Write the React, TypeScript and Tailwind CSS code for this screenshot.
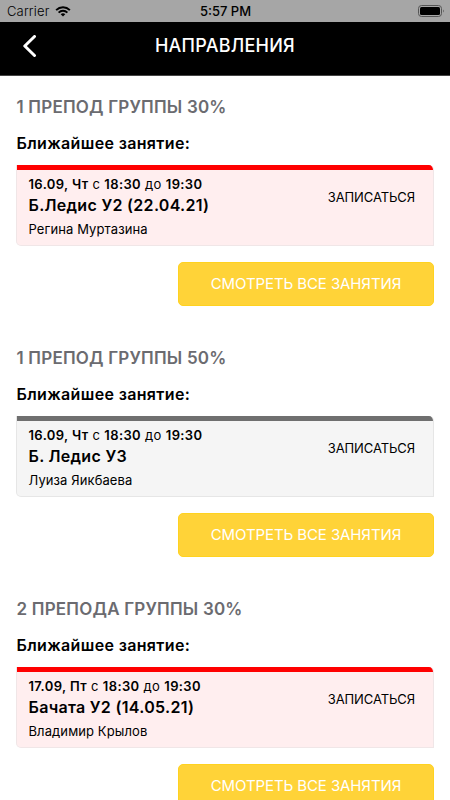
type Lesson = {
  group: string;
  date: string;
  from: string;
  to: string;
  title: string;
  teacher: string;
  color: 'red' | 'gray';
};

const lessons: Lesson[] = [
  { group: '1 ПРЕПОД ГРУППЫ 30%', date: '16.09, Чт', from: '18:30', to: '19:30', title: 'Б.Ледис У2 (22.04.21)', teacher: 'Регина Муртазина', color: 'red' },
  { group: '1 ПРЕПОД ГРУППЫ 50%', date: '16.09, Чт', from: '18:30', to: '19:30', title: 'Б. Ледис У3', teacher: 'Луиза Яикбаева', color: 'gray' },
  { group: '2 ПРЕПОДА ГРУППЫ 30%', date: '17.09, Пт', from: '18:30', to: '19:30', title: 'Бачата У2 (14.05.21)', teacher: 'Владимир Крылов', color: 'red' },
];

function StatusBar() {
  return (
    <div className="grid h-[22px] grid-cols-3 items-center bg-[#a6a6a6] pr-[6px] pl-[7px] text-[13px]">
      <div className="flex items-center gap-[5px]">
        <span className="pt-px font-light tracking-[0.15px]">Carrier</span>
        <svg width="16" height="11" viewBox="0 0 17 12" fill="none" stroke="black" strokeWidth="2.1">
          <path d="M1 4.5c4.2-4.1 10.8-4.1 15 0" />
          <path d="M3.7 7.2c2.7-2.6 6.9-2.6 9.6 0" />
          <path d="M8.5 11.5 6 9c1.4-1.3 3.6-1.3 5 0Z" fill="black" stroke="none" />
        </svg>
      </div>
      <span className="pt-px text-center font-medium">5:57 PM</span>
      <svg className="justify-self-end" width="26" height="12" viewBox="0 0 26 12">
        <rect x="0.5" y="0.5" width="23" height="11" rx="3" fill="none" stroke="#555" />
        <rect x="2" y="2" width="20" height="8" rx="1.5" />
        <path d="M25 4.5v3c1-.6 1-2.4 0-3" fill="#555" />
      </svg>
    </div>
  );
}

function LessonCard({ lesson }: { lesson: Lesson }) {
  const red = lesson.color === 'red';

  return (
    <div
      className={`mt-3 h-[81px] overflow-hidden rounded-tr-[5px] rounded-bl-[5px] border border-t-0 ${red ? 'border-[#f0e6e7] bg-[#ffeeef]' : 'border-[#e6e6e6] bg-[#f5f5f5]'}`}
    >
      <div className={`h-[5px] ${red ? 'bg-[#ff0000]' : 'bg-[#6f6f6f]'}`} />
      <div className="flex justify-between pr-[18px] pl-[11.5px]">
        <div>
          <p className="mt-[6px] text-[13px] leading-4 tracking-[0.37px]">
            <b className="font-semibold">{lesson.date}</b> с <b className="font-semibold">{lesson.from}</b> до{' '}
            <b className="font-semibold">{lesson.to}</b>
          </p>
          <h3 className="mt-[3px] text-base leading-5 font-semibold tracking-[0.3px]">{lesson.title}</h3>
          <p className="mt-[6px] text-[13px] leading-4 tracking-[0.1px]">{lesson.teacher}</p>
        </div>
        <button type="button" className="mt-[17px] h-5 text-[13px] leading-5 tracking-[-0.1px]">
          ЗАПИСАТЬСЯ
        </button>
      </div>
    </div>
  );
}

function LessonSection({ lesson }: { lesson: Lesson }) {
  return (
    <section className="flex h-[251px] flex-col">
      <h2 className="pl-[0.5px] text-[17px] leading-[22px] font-semibold tracking-[0.2px] text-[#6b6b70]">{lesson.group}</h2>
      <p className="mt-[15px] pl-[0.5px] text-base leading-5 font-semibold tracking-[0.35px]">Ближайшее занятие:</p>
      <LessonCard lesson={lesson} />
      <button
        type="button"
        className="mt-4 h-[44px] w-[256px] shrink-0 self-end rounded-[5px] border border-[#ffd21f] bg-[#ffd338] text-[15px] tracking-[-0.1px] text-white"
      >
        СМОТРЕТЬ ВСЕ ЗАНЯТИЯ
      </button>
    </section>
  );
}

export default function App() {
  return (
    <div className="h-[800px] overflow-hidden bg-white font-[Inter,sans-serif] text-black">
      <StatusBar />
      <header className="grid h-[54px] grid-cols-3 items-center border-b border-[#444] bg-black pb-[5px] text-white">
        <svg className="ml-[22px]" width="15" height="22" viewBox="0 0 15 22" fill="none" stroke="currentColor" strokeWidth="3">
          <path d="M12.5 1.5 2.8 11l9.7 9.5" strokeLinecap="round" strokeLinejoin="round" />
        </svg>
        <h1 className="text-center text-lg font-medium tracking-[0.25px]">НАПРАВЛЕНИЯ</h1>
      </header>
      <main className="px-4 pt-5">
        {lessons.map((lesson) => (
          <LessonSection key={lesson.group} lesson={lesson} />
        ))}
      </main>
    </div>
  );
}
